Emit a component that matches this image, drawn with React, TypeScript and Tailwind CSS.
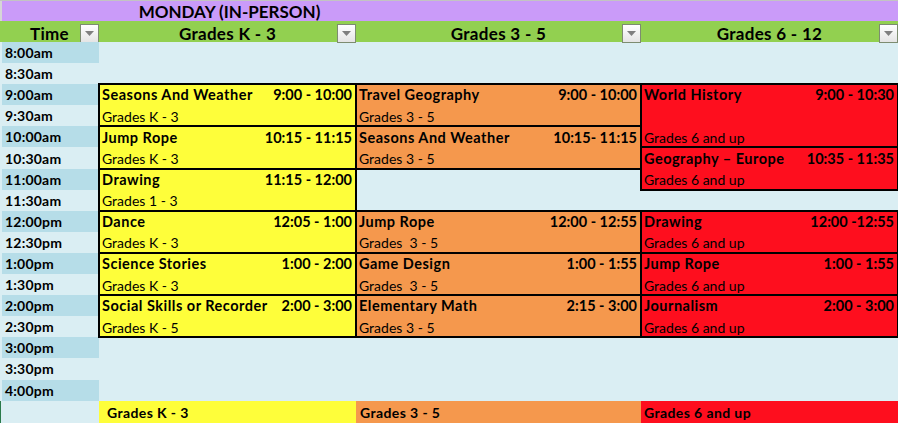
import React from "react";

type Block = {
  pos: string;
  title: string;
  time: string;
  sub: string;
  color: string;
  subPos?: string;
};

const yellow = "bg-[#fefe3a]";
const orange = "bg-[#f5984d]";
const red = "bg-[#fe0e1e]";

const times = [
  "8:00am", "8:30am", "9:00am", "9:30am", "10:00am", "10:30am", "11:00am", "11:30am",
  "12:00pm", "12:30pm", "1:00pm", "1:30pm", "2:00pm", "2:30pm", "3:00pm", "3:30pm", "4:00pm",
];

const blocks: Block[] = [
  // Grades K - 3
  { pos: "col-start-2 row-start-3 row-span-2", title: "Seasons And Weather", time: "9:00 - 10:00", sub: "Grades K - 3", color: yellow },
  { pos: "col-start-2 row-start-5 row-span-2", title: "Jump Rope", time: "10:15 - 11:15", sub: "Grades K - 3", color: yellow },
  { pos: "col-start-2 row-start-7 row-span-2", title: "Drawing", time: "11:15 - 12:00", sub: "Grades 1 - 3", color: yellow },
  { pos: "col-start-2 row-start-9 row-span-2", title: "Dance", time: "12:05 - 1:00", sub: "Grades K - 3", color: yellow },
  { pos: "col-start-2 row-start-11 row-span-2", title: "Science Stories", time: "1:00 - 2:00", sub: "Grades K - 3", color: yellow },
  { pos: "col-start-2 row-start-13 row-span-2", title: "Social Skills or Recorder", time: "2:00 - 3:00", sub: "Grades K - 5", color: yellow },
  // Grades 3 - 5
  { pos: "col-start-3 row-start-3 row-span-2", title: "Travel Geography", time: "9:00 - 10:00", sub: "Grades 3 - 5", color: orange },
  { pos: "col-start-3 row-start-5 row-span-2", title: "Seasons And Weather", time: "10:15- 11:15", sub: "Grades 3 - 5", color: orange },
  { pos: "col-start-3 row-start-9 row-span-2", title: "Jump Rope", time: "12:00 - 12:55", sub: "Grades  3 - 5", color: orange },
  { pos: "col-start-3 row-start-11 row-span-2", title: "Game Design", time: "1:00 - 1:55", sub: "Grades  3 - 5", color: orange },
  { pos: "col-start-3 row-start-13 row-span-2", title: "Elementary Math", time: "2:15 - 3:00", sub: "Grades 3 - 5", color: orange },
  // Grades 6 - 12
  { pos: "col-start-4 row-start-3 row-span-3", title: "World History", time: "9:00 - 10:30", sub: "Grades 6 and up", color: red, subPos: "row-start-3" },
  { pos: "col-start-4 row-start-6 row-span-2", title: "Geography \u2013 Europe", time: "10:35 - 11:35", sub: "Grades 6 and up", color: red },
  { pos: "col-start-4 row-start-9 row-span-2", title: "Drawing", time: "12:00 -12:55", sub: "Grades 6 and up", color: red },
  { pos: "col-start-4 row-start-11 row-span-2", title: "Jump Rope", time: "1:00 - 1:55", sub: "Grades 6 and up", color: red },
  { pos: "col-start-4 row-start-13 row-span-2", title: "Journalism", time: "2:00 - 3:00", sub: "Grades 6 and up", color: red },
];

const Dropdown = () => (
  <div className="w-[19px] h-[19px] border border-[#7d8c70] bg-gradient-to-b from-white to-[#e4e4e4] flex items-center justify-center">
    <svg width="9" height="5" viewBox="0 0 9 5">
      <path d="M0 0h9L4.5 5z" fill="#7f7f7f" />
    </svg>
  </div>
);

const HeaderCell = ({ label }: { label: string }) => (
  <div className="grid grid-cols-[19px_1fr_19px] items-center">
    <span />
    <span className="text-center text-[17px] font-bold tracking-[0.3px] whitespace-nowrap">{label}</span>
    <Dropdown />
  </div>
);

const ScheduleBlock = ({ block }: { block: Block }) => (
  <div className={`${block.pos} ${block.color} -m-px border-2 border-black grid grid-rows-[repeat(3,21.1px)] content-start pl-[2px] pr-[3px] text-[14px] leading-none`}>
    <div className="flex items-center justify-between font-bold text-[14.5px]">
      <span className="tracking-[0.5px]">{block.title}</span>
      <span>{block.time}</span>
    </div>
    <div className={`flex items-center whitespace-pre ${block.subPos ?? ""}`}>{block.sub}</div>
  </div>
);

export default function App() {
  return (
    <div
      className="w-[898px] h-[423px] overflow-hidden bg-[#daeef3] text-black border-t border-[#c3c3c3]"
      style={{ fontFamily: "Lato, 'Noto Sans', sans-serif" }}
    >
      <div className="grid grid-cols-[99px_257px_285px_257px] h-[20px] bg-[#ca9bf9] border-l-2 border-[#d6d6d6]">
        <span />
        <div className="flex items-center justify-center text-[17px] leading-none font-bold whitespace-nowrap">MONDAY (IN-PERSON)</div>
      </div>
      <div className="grid grid-cols-[99px_257px_285px_257px] h-[21px] bg-[#92d050]">
        <HeaderCell label="Time" />
        <HeaderCell label="Grades K - 3" />
        <HeaderCell label="Grades 3 - 5" />
        <HeaderCell label="Grades 6 - 12" />
      </div>
      <div className="grid grid-cols-[99px_257px_285px_257px] grid-rows-[repeat(17,21.1px)]">
        {times.map((t, i) => (
          <div
            key={t}
            className={`col-start-1 ml-[2px] pl-[3px] flex items-center text-[14px] font-bold tracking-[0.2px] ${i % 2 === 0 ? "bg-[#b6dde8]" : ""}`}
            style={{ gridRow: i + 1 }}
          >
            {t}
          </div>
        ))}
        {blocks.map((b) => (
          <ScheduleBlock key={b.pos} block={b} />
        ))}
      </div>
      <div className="grid grid-cols-[99px_257px_285px_257px] h-[23px] text-[14px] font-bold tracking-[0.4px]">
        <div className="border-l border-[#2a7a4a]" />
        <div className={`${yellow} flex items-end pl-[8px] pb-[1px]`}>Grades K - 3</div>
        <div className={`${orange} flex items-end pl-[4px] pb-[1px]`}>Grades 3 - 5</div>
        <div className={`${red} flex items-end pl-[3px] pb-[1px]`}>Grades 6 and up</div>
      </div>
    </div>
  );
}
